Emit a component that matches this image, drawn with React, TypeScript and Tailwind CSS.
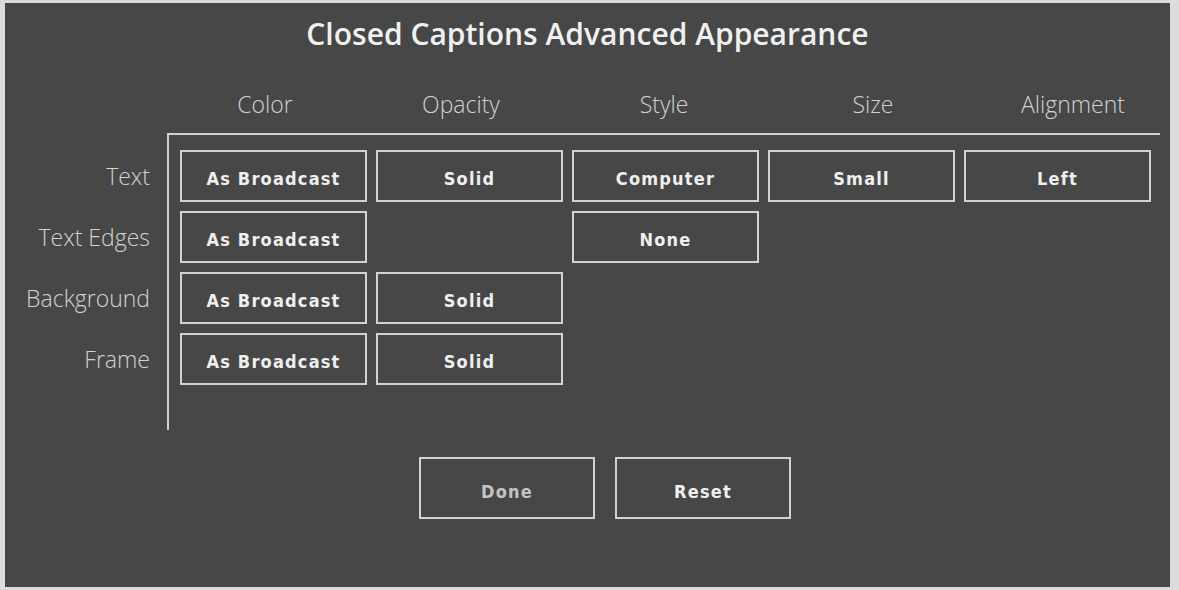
import React from "react";

const COLUMNS = [
  { label: "Color", pad: "pl-0" },
  { label: "Opacity", pad: "pl-0" },
  { label: "Style", pad: "pl-[14px]" },
  { label: "Size", pad: "pl-[40px]" },
  { label: "Alignment", pad: "pl-[48px]" },
];

// null = no option for that attribute
const ROWS: { label: string; values: (string | null)[] }[] = [
  { label: "Text", values: ["As Broadcast", "Solid", "Computer", "Small", "Left"] },
  { label: "Text Edges", values: ["As Broadcast", null, "None", null, null] },
  { label: "Background", values: ["As Broadcast", "Solid", null, null, null] },
  { label: "Frame", values: ["As Broadcast", "Solid", null, null, null] },
];

function OptionButton({ value }: { value: string | null }) {
  if (!value) return <div className="w-[187px] h-[52px]" />;
  return (
    <button className="w-[187px] h-[52px] pt-[5px] border-2 border-[#d2d2d2] bg-transparent text-[#efefef] text-[18px] font-bold font-['DejaVu_Sans_Condensed','DejaVu_Sans',sans-serif] tracking-[1.2px]">
      {value}
    </button>
  );
}

export default function App() {
  return (
    <div className="w-[1179px] h-[590px] bg-[#dcdcdc] pt-[3px] pl-[5px] pr-[9px] pb-[3px]">
      <div className="w-full h-full bg-[#474747] font-['Open_Sans',sans-serif]">
        {/* Title */}
        <h1 className="pt-[13px] h-[49px] text-center text-[30px] leading-[36px] font-semibold text-[#f0f0f0]">
          Closed Captions Advanced Appearance
        </h1>

        {/* Column headers */}
        <div className="flex pl-[162px] mt-[37px] h-[30px]">
          {COLUMNS.map((c) => (
            <div
              key={c.label}
              className={`w-[196px] text-center text-[23px] leading-[30px] font-light text-[#d2d2d2] ${c.pad}`}
            >
              {c.label}
            </div>
          ))}
        </div>

        {/* Attribute grid */}
        <div className="flex mt-[14px]">
          <div className="w-[162px] pt-[17px] pr-[17px] flex flex-col gap-[9px]">
            {ROWS.map((r) => (
              <div
                key={r.label}
                className="h-[52px] flex items-center justify-end whitespace-nowrap text-[23px] font-light text-[#d2d2d2]"
              >
                {r.label}
              </div>
            ))}
          </div>
          <div className="w-[993px] h-[297px] border-t-2 border-l-2 border-[#d2d2d2] pt-[15px] pl-[11px] flex flex-col gap-[9px]">
            {ROWS.map((r) => (
              <div key={r.label} className="flex gap-[9px]">
                {r.values.map((v, i) => (
                  <OptionButton key={i} value={v} />
                ))}
              </div>
            ))}
          </div>
        </div>

        {/* Actions */}
        <div className="flex gap-[20px] pl-[414px] mt-[27px]">
          <button className="w-[176px] h-[62px] pt-[6px] border-2 border-[#d2d2d2] text-[#c4c4c4] text-[18px] tracking-[1.2px] font-bold font-['DejaVu_Sans_Condensed','DejaVu_Sans',sans-serif]">
            Done
          </button>
          <button className="w-[176px] h-[62px] pt-[6px] border-2 border-[#d2d2d2] text-[#f0f0f0] text-[18px] tracking-[1.2px] font-bold font-['DejaVu_Sans_Condensed','DejaVu_Sans',sans-serif]">
            Reset
          </button>
        </div>
      </div>
    </div>
  );
}
